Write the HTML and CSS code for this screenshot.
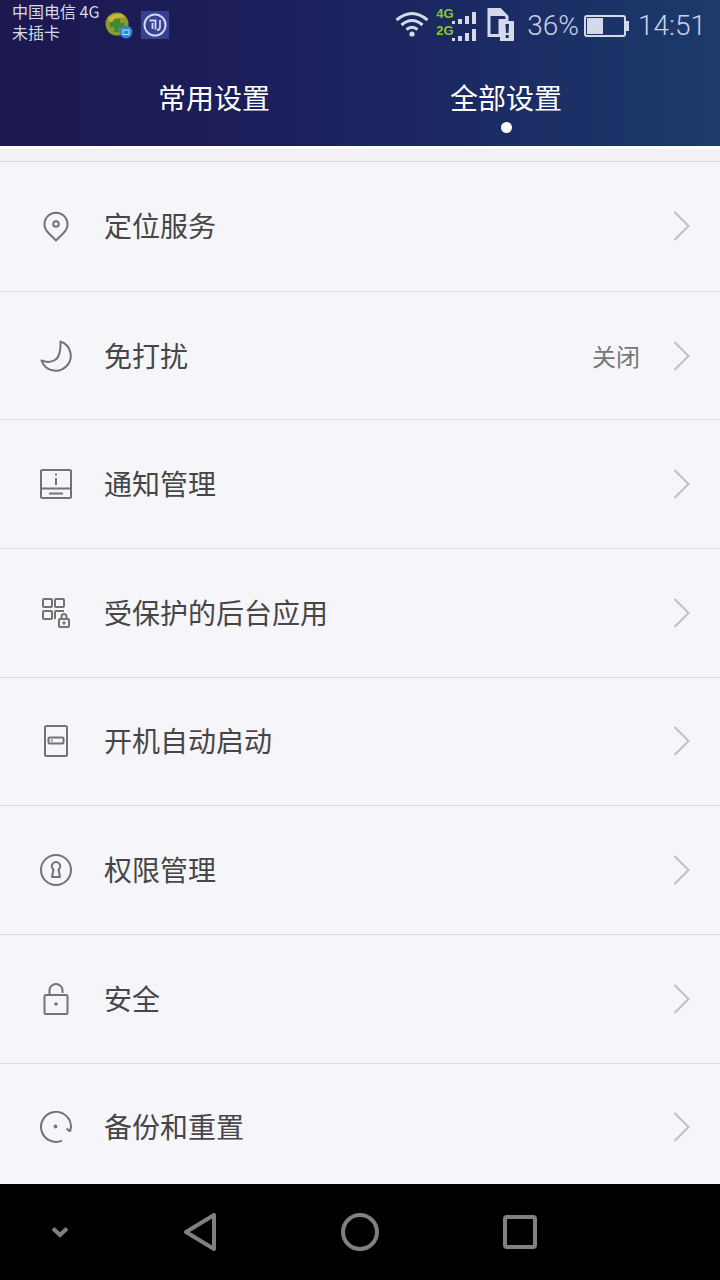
FILE: index.html
```html
<!DOCTYPE html>
<html>
<head>
    <title>设置</title>
    <meta name="viewport" content="width=device-width, initial-scale=1">
    <link rel="stylesheet" href="styles.css">
</head>
<body>
    <div class="screen">
        <div class="header">
            <div class="status">
                <div class="carrier">
                    <div>中国电信 4G</div>
                    <div>未插卡</div>
                </div>
                <svg class="app-ball" width="28" height="30" viewBox="0 0 28 30">
                    <circle cx="12" cy="12" r="11.5" fill="#8a9a2c"/>
                    <path d="M3 6Q10 1 17 2L20 6Q12 4 5 11Z" fill="#c9b338"/>
                    <path d="M9 7h6v4h4v5h-5v4h-5v-5h-4v-5h4z" fill="#3f8a34"/>
                    <circle cx="21" cy="20" r="6.5" fill="#2f86d8"/>
                    <rect x="18" y="18" width="6" height="4.5" fill="none" stroke="#bfe0fa" stroke-width="1"/>
                </svg>
                <svg class="app-square" width="28" height="28" viewBox="0 0 28 28">
                    <rect width="28" height="28" fill="#37418f"/>
                    <circle cx="14" cy="14" r="10.5" fill="none" stroke="#cfd6f0" stroke-width="2"/>
                    <path d="M8.500 9.500h6v9M19 9v7q0 3 -3 3M11.500 12v6" fill="none" stroke="#cfd6f0" stroke-width="1.800"/>
                </svg>
                <div class="status-right">
                    <svg class="wifi" width="34" height="26" viewBox="0 0 34 26">
                        <path d="M1.500 9Q17 -4 32.500 9M6.500 14Q17 5 27.500 14M11.500 18.500Q17 14 22.500 18.500" fill="none" stroke="#d5daea" stroke-width="3"/>
                        <circle cx="17" cy="23" r="2.600" fill="#d5daea"/>
                    </svg>
                    <div class="signal">
                        <div class="signal-row">
                            <span class="net">4G</span>
                            <svg width="24" height="12" viewBox="0 0 24 12"><path d="M0 9h3v3h-3zM6 7h4v5h-4zM13 4h4v8h-4zM20 0h4v12h-4z" fill="#d5daea"/></svg>
                        </div>
                        <div class="signal-row">
                            <span class="net">2G</span>
                            <svg width="24" height="12" viewBox="0 0 24 12"><path d="M0 9h3v3h-3zM6 7h4v5h-4zM13 4h4v8h-4zM20 0h4v12h-4z" fill="#d5daea"/></svg>
                        </div>
                    </div>
                    <svg class="sim" width="28" height="33" viewBox="0 0 28 33">
                        <path d="M2 1.500h11l7 7v4h-7v15h-11z" fill="none" stroke="#d5daea" stroke-width="3"/>
                        <path d="M2 1h11l7 7H2z" fill="#d5daea"/>
                        <path d="M13 13h13q1 0 1 1v18q0 1 -1 1h-13z" fill="#d5daea"/>
                        <path d="M18.500 16h3.500l-.5 9h-2.500zM18.700 27h3v3h-3z" fill="#1c2a5e"/>
                    </svg>
                    <span class="percent">36%</span>
                    <div class="battery"><div class="battery-fill"></div></div>
                    <span class="clock">14:51</span>
                </div>
            </div>
            <div class="tabs">
                <div class="tab">常用设置</div>
                <div class="tab">全部设置<span class="dot"></span></div>
            </div>
        </div>

        <div class="band"></div>

        <div class="list">
            <div class="row row-first">
                <svg class="icon" width="32" height="32" viewBox="0 0 32 32">
                    <path d="M16 30.500L8 22.500A11.500 11.500 0 1 1 24 22.500Z" stroke-linejoin="round"/>
                    <circle cx="16" cy="14" r="2.800"/>
                </svg>
                <span class="label">定位服务</span>
                <svg class="arrow" width="18" height="30" viewBox="0 0 18 30"><path d="M2.500 1L16.500 15L2.500 29"/></svg>
            </div>
            <div class="row">
                <svg class="icon" width="32" height="32" viewBox="0 0 32 32">
                    <path d="M20.500 1.500A15 15 0 1 1 1.500 20.500Q9 23.500 15 20T20.500 1.500Z" stroke-linejoin="round"/>
                </svg>
                <span class="label">免打扰</span>
                <span class="value">关闭</span>
                <svg class="arrow" width="18" height="30" viewBox="0 0 18 30"><path d="M2.500 1L16.500 15L2.500 29"/></svg>
            </div>
            <div class="row">
                <svg class="icon" width="32" height="30" viewBox="0 0 32 30">
                    <rect x="1" y="1" width="30" height="28" rx="1.500"/>
                    <path d="M1 19.500H31M9 24.500H23M16 9V16"/>
                    <path d="M16 4.500V6.500"/>
                </svg>
                <span class="label">通知管理</span>
                <svg class="arrow" width="18" height="30" viewBox="0 0 18 30"><path d="M2.500 1L16.500 15L2.500 29"/></svg>
            </div>
            <div class="row">
                <svg class="icon" width="28" height="30" viewBox="0 0 28 30">
                    <rect x="1" y="1" width="9" height="8" rx="1"/>
                    <rect x="13" y="1" width="9" height="8" rx="1"/>
                    <rect x="1" y="13" width="9" height="8" rx="1"/>
                    <path d="M13 21V14q0-1 1-1h8"/>
                    <rect x="17" y="21" width="10" height="8" rx="1"/>
                    <path d="M19.500 21v-2.500a2.500 2.500 0 0 1 5 0V21"/>
                    <circle cx="22" cy="25" r=".7"/>
                </svg>
                <span class="label">受保护的后台应用</span>
                <svg class="arrow" width="18" height="30" viewBox="0 0 18 30"><path d="M2.500 1L16.500 15L2.500 29"/></svg>
            </div>
            <div class="row">
                <svg class="icon" width="24" height="32" viewBox="0 0 24 32">
                    <rect x="1" y="1" width="22" height="30" rx="1.500"/>
                    <rect x="4.500" y="12.500" width="15" height="6" rx="1"/>
                    <path d="M7 15.500H8.500"/>
                </svg>
                <span class="label">开机自动启动</span>
                <svg class="arrow" width="18" height="30" viewBox="0 0 18 30"><path d="M2.500 1L16.500 15L2.500 29"/></svg>
            </div>
            <div class="row">
                <svg class="icon" width="32" height="32" viewBox="0 0 32 32">
                    <circle cx="16" cy="16" r="15"/>
                    <path d="M13.500 15.500a4.200 4.200 0 1 1 5 0L20 23H12Z" stroke-linejoin="round"/>
                </svg>
                <span class="label">权限管理</span>
                <svg class="arrow" width="18" height="30" viewBox="0 0 18 30"><path d="M2.500 1L16.500 15L2.500 29"/></svg>
            </div>
            <div class="row">
                <svg class="icon" width="26" height="32" viewBox="0 0 26 32">
                    <rect x="1.500" y="12" width="23" height="19" rx="1.500"/>
                    <path d="M6.500 12V7.500a6.500 6.500 0 0 1 13 0V10"/>
                    <circle cx="13" cy="21" r=".8"/>
                </svg>
                <span class="label">安全</span>
                <svg class="arrow" width="18" height="30" viewBox="0 0 18 30"><path d="M2.500 1L16.500 15L2.500 29"/></svg>
            </div>
            <div class="row row-last">
                <svg class="icon" width="32" height="32" viewBox="0 0 32 32">
                    <path d="M22 29.600A15 15 0 1 1 31 16L30 20.500M26.500 17.500L30 20.500" stroke-linejoin="round"/>
                    <circle cx="15.500" cy="15.500" r=".9"/>
                </svg>
                <span class="label">备份和重置</span>
                <svg class="arrow" width="18" height="30" viewBox="0 0 18 30"><path d="M2.500 1L16.500 15L2.500 29"/></svg>
            </div>
        </div>

        <div class="navbar">
            <svg class="nav-hide" width="18" height="12" viewBox="0 0 18 12"><path d="M2 2.500L9 9L16 2.500"/></svg>
            <svg class="nav-back" width="34" height="38" viewBox="0 0 34 38"><path d="M31 2V36L3 19Z" stroke-linejoin="round"/></svg>
            <svg class="nav-home" width="38" height="38" viewBox="0 0 38 38"><circle cx="19" cy="19" r="17"/></svg>
            <svg class="nav-recent" width="34" height="34" viewBox="0 0 34 34"><rect x="2" y="2" width="30" height="30" rx="2"/></svg>
        </div>
    </div>
</body>
</html>
```

FILE: styles.css
```css
* {
    box-sizing: border-box;
}
html, body {
    margin: 0;
    padding: 0;
}
body {
    font-family: "Noto Sans CJK SC", Roboto, sans-serif;
    background-color: #f6f5f9;
}
.screen {
    width: 720px;
    height: 1280px;
    display: flex;
    flex-direction: column;
    overflow: hidden;
}
.header {
    height: 146px;
    background: linear-gradient(90deg, #1c1850 0%, #1c1f5c 40%, #1b2a62 65%, #1c3a6c 100%);
}
.status {
    height: 46px;
    display: flex;
    align-items: flex-start;
    padding: 0 14px 0 12px;
    color: #d5daea;
}
.carrier {
    width: 93px;
    padding-top: 1px;
    font-size: 16px;
    line-height: 21px;
    white-space: nowrap;
}
.app-ball {
    margin-top: 12px;
}
.app-square {
    margin: 11px 0 0 8px;
}
.status-right {
    margin-left: auto;
    display: flex;
    align-items: center;
    height: 46px;
    padding-top: 6px;
}
.wifi {
    margin-top: -4px;
}
.signal {
    margin: -4px 0 0 6px;
    width: 41px;
}
.signal-row {
    height: 17px;
    display: flex;
    justify-content: space-between;
    align-items: flex-end;
}
.net {
    font-family: "Liberation Sans", sans-serif;
    font-size: 13px;
    font-weight: bold;
    line-height: 14px;
    color: #86c832;
    margin: 0 0 3px 1px;
}
.signal-row svg {
    margin-left: -4px;
}
.sim {
    margin: -4px 0 0 11px;
}
.percent,
.clock {
    font-family: Roboto, sans-serif;
    font-weight: 300;
    font-size: 28px;
    line-height: 32px;
    color: #c9d1e6;
}
.percent {
    margin-left: 12px;
}
.battery {
    margin-left: 5px;
    width: 42px;
    height: 22px;
    border: 2px solid #d5daea;
    border-radius: 3px;
    padding: 1px;
    position: relative;
}
.battery::after {
    content: "";
    position: absolute;
    right: -5px;
    top: 4px;
    width: 3px;
    height: 10px;
    background-color: #d5daea;
}
.battery-fill {
    width: 16px;
    height: 100%;
    background-color: #d5daea;
}
.clock {
    margin-left: 12px;
}
.tabs {
    display: flex;
    justify-content: center;
}
.tab {
    width: 292px;
    text-align: center;
    font-size: 28px;
    line-height: 40px;
    margin-top: 31px;
    color: #fff;
    position: relative;
}
.dot {
    position: absolute;
    left: 140.500px;
    top: 45px;
    width: 11px;
    height: 11px;
    border-radius: 50%;
    background-color: #fff;
}
.band {
    height: 16px;
    border-top: 3px solid #fff;
    border-bottom: 1px solid #d9d9dc;
    background-color: #f2f2f3;
}
.list {
    flex: 1;
    display: flex;
    flex-direction: column;
}
.row {
    height: 128.670px;
    display: flex;
    align-items: center;
    padding: 0 30px 0 40px;
    border-bottom: 1px solid #dcdcde;
}
.row-first {
    height: 129.700px;
}
.row-last {
    border-bottom: none;
    flex: 1;
    height: auto;
    padding-top: 7px;
}
.icon {
    flex: none;
    width: 32px;
    fill: none;
    stroke: #737373;
    stroke-width: 2;
}
.label {
    margin: 0 0 2px 32px;
    font-size: 28px;
    line-height: 40px;
    color: #464646;
}
.value {
    margin: 0 0 0 auto;
    font-size: 24px;
    color: #777;
}
.arrow {
    flex: none;
    margin-left: auto;
    fill: none;
    stroke: #c0c0c2;
    stroke-width: 2;
}
.value + .arrow {
    margin-left: 32px;
}
.navbar {
    height: 96px;
    flex: none;
    background-color: #000;
    display: flex;
    align-items: center;
    padding-left: 51px;
    padding-bottom: 1px;
}
.navbar svg {
    fill: none;
    stroke: #808080;
    stroke-width: 4;
    flex: none;
}
.nav-back {
    margin-left: 114px;
}
.nav-home {
    margin-left: 124px;
}
.nav-recent {
    margin-left: 124px;
}
```
